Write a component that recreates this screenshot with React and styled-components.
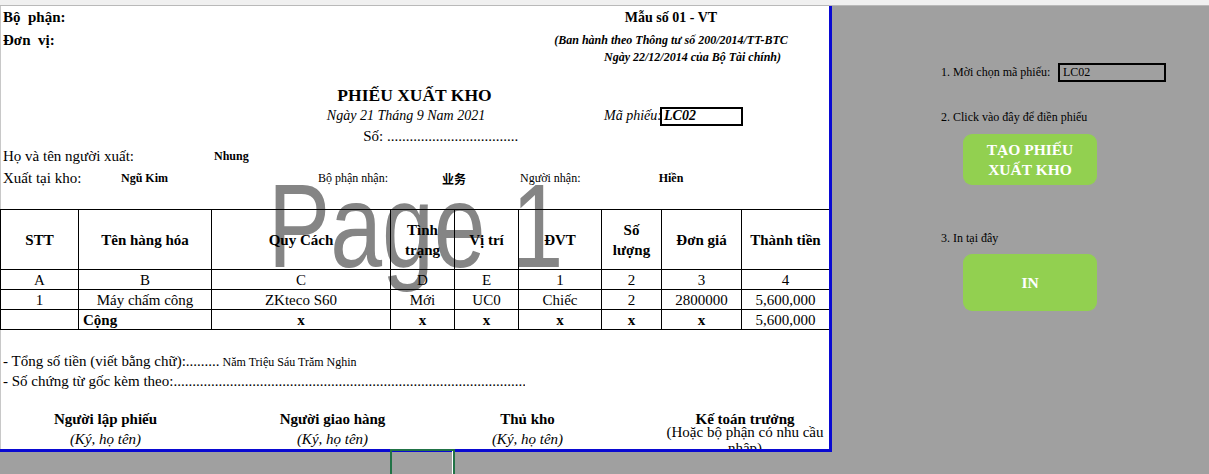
import React from "react";
import styled, { createGlobalStyle } from "styled-components";

const GlobalStyle = createGlobalStyle`
  html, body {
    margin: 0;
    padding: 0;
  }
  body {
    font-family: "Liberation Serif", "Times New Roman", serif;
    color: #000;
    background: #a0a0a0;
    overflow: hidden;
  }
`;

const COLS = "78px 133px 179px 64px 64px 83px 60px 80px 88px";
const WIDTHS = [78, 133, 179, 64, 64, 83, 60, 80, 88];

const Window = styled.div`
  position: relative;
  width: 1209px;
  height: 474px;
  display: flex;
  flex-direction: column;
  overflow: hidden;
  background: #a0a0a0;
`;

const TopStrip = styled.div`
  flex: none;
  height: 5px;
  background: #f0f0f0;
  border-bottom: 1px solid #b9b9b9;
`;

const Workspace = styled.div`
  flex: 1;
  display: flex;
  align-items: flex-start;
`;

const Sheet = styled.div`
  position: relative;
  flex: none;
  width: 829px;
  height: 443px;
  background: #fff;
  border-right: 3px solid #0a0ad2;
  border-bottom: 3px solid #0a0ad2;
  box-shadow: inset 1px 0 #c8c8c8;
  overflow: hidden;
`;

const Watermark = styled.div`
  position: absolute;
  left: 268px;
  top: 161px;
  z-index: 0;
  font-family: "Liberation Sans", Arial, sans-serif;
  font-size: 118px;
  line-height: 1;
  color: #858585;
  white-space: pre;
  transform: scaleX(0.79);
  transform-origin: left top;
  pointer-events: none;
`;

const Row = styled.div`
  position: relative;
  z-index: 1;
  display: grid;
  grid-template-columns: ${COLS};
  grid-template-rows: ${(p) => p.$h}px;
  height: ${(p) => p.$h}px;
  align-items: center;
`;

const justify = { left: "flex-start", center: "center", right: "flex-end" };

const Text = styled.div`
  grid-column: ${(p) => p.$col};
  grid-row: 1;
  min-width: 0;
  display: flex;
  align-items: baseline;
  justify-content: ${(p) => justify[p.$align || "left"]};
  padding: 0 ${(p) => p.$pr || 0}px 0 ${(p) => p.$pl || 0}px;
  font-size: ${(p) => p.$size || 15}px;
  font-weight: ${(p) => (p.$bold ? 700 : 400)};
  font-style: ${(p) => (p.$italic ? "italic" : "normal")};
  white-space: pre;
`;

const Small = styled.span`
  font-size: 12px;
`;

const Cjk = styled.span`
  font-family: "Noto Sans CJK SC", "Liberation Serif", sans-serif;
`;

const CodeBox = styled.div`
  grid-column: 8;
  grid-row: 1;
  margin-left: -1px;
  width: 83px;
  height: 19px;
  box-sizing: border-box;
  border: 2px solid #000;
  padding-left: 2px;
  display: flex;
  align-items: center;
  font-size: 14px;
  font-weight: 700;
  font-style: italic;
`;

const Leader = styled.span`
  display: inline-block;
  width: ${(p) => p.$w}px;
  overflow: hidden;
  white-space: nowrap;
  vertical-align: bottom;
`;

const Wrapped = styled.div`
  grid-column: ${(p) => p.$col};
  grid-row: 1;
  padding: 0 4px;
  text-align: center;
  font-size: 15px;
  line-height: 16px;
  white-space: normal;
`;

const Table = styled.table`
  position: relative;
  z-index: 1;
  width: 829px;
  table-layout: fixed;
  border-collapse: collapse;
  font-size: 15px;
`;

const Tr = styled.tr`
  height: ${(p) => p.$h}px;
`;

const Td = styled.td`
  padding: 0 ${(p) => (p.$align === "left" || p.$head ? 4 : 1)}px;
  border: 1px solid #000;
  text-align: ${(p) => p.$align || "center"};
  vertical-align: middle;
  font-weight: ${(p) => (p.$bold ? 700 : 400)};
  line-height: ${(p) => (p.$head ? 20 : 18)}px;
  white-space: ${(p) => (p.$head ? "normal" : "nowrap")};
  overflow: hidden;
`;

const Panel = styled.div`
  flex: 1;
  display: flex;
  flex-direction: column;
  align-items: flex-start;
  padding: 57px 0 0 109px;
  font-size: 12px;
`;

const PickRow = styled.div`
  display: flex;
  align-items: center;
  height: 19px;
`;

const PickLabel = styled.span`
  width: 117px;
`;

const PickBox = styled.div`
  width: 108px;
  height: 19px;
  box-sizing: border-box;
  border: 2px solid #000;
  padding-left: 3px;
  display: flex;
  align-items: center;
`;

const Step = styled.div`
  margin-top: ${(p) => p.$mt}px;
  line-height: 14px;
`;

const GreenButton = styled.button`
  margin: ${(p) => p.$mt}px 0 0 22px;
  width: 134px;
  height: ${(p) => p.$h}px;
  padding: 0;
  border: none;
  border-radius: 9px;
  background: #92d050;
  color: #fff;
  font-family: "Liberation Serif", "Times New Roman", serif;
  font-size: 15.5px;
  font-weight: 700;
  line-height: 20px;
  display: flex;
  align-items: center;
  justify-content: center;
  text-align: center;
`;

const Selection = styled.div`
  position: absolute;
  left: 390px;
  top: 449px;
  z-index: 2;
  width: 65px;
  height: 32px;
  box-sizing: border-box;
  border: 2px solid #217346;
  box-shadow: inset -1px 0 #fff;
`;

const headers = [
  "STT",
  "Tên hàng hóa",
  "Quy Cách",
  "Tình trạng",
  "Vị trí",
  "ĐVT",
  "Số lượng",
  "Đơn giá",
  "Thành tiền",
];
const codes = ["A", "B", "C", "D", "E", "1", "2", "3", "4"];
const items = [
  ["1", "Máy chấm công", "ZKteco S60", "Mới", "UC0", "Chiếc", "2", "2800000", "5,600,000"],
];

const DOTS = ".".repeat(140);

const App = () => (
  <Window>
    <GlobalStyle />
    <TopStrip />
    <Workspace>
      <Sheet>
        <Watermark>Page 1</Watermark>

        <Row $h={23}>
          <Text $col="1 / 4" $pl={3} $bold>Bộ  phận:</Text>
          <Text $col="7 / 9" $align="center" $size={14} $bold>Mẫu số 01 - VT</Text>
        </Row>
        <Row $h={22}>
          <Text $col="1 / 4" $pl={3} $bold>Đơn  vị:</Text>
          <Text $col="7 / 9" $align="center" $size={12} $bold $italic>
            (Ban hành theo Thông tư số 200/2014/TT-BTC
          </Text>
        </Row>
        <Row $h={12}>
          <Text $col="7 / 10" $pl={3} $size={12} $bold $italic>
            Ngày 22/12/2014 của Bộ Tài chính)
          </Text>
        </Row>
        <Row $h={22} />
        <Row $h={20}>
          <Text $col="1 / 10" $align="center" $size={17.5} $bold>PHIẾU XUẤT KHO</Text>
        </Row>
        <Row $h={22}>
          <Text $col="3 / 7" $align="center" $size={14} $italic>Ngày 21 Tháng 9 Nam 2021</Text>
          <Text $col="7" $pl={3} $size={14} $italic>Mã phiếu:</Text>
          <CodeBox>LC02</CodeBox>
        </Row>
        <Row $h={18}>
          <Text $col="3 / 6" $align="right">
            Số: <Leader $w={131}>{DOTS}</Leader>
          </Text>
        </Row>
        <Row $h={22}>
          <Text $col="1 / 3" $pl={3}>Họ và tên người xuất:</Text>
          <Text $col="3" $pl={3} $size={12} $bold>Nhung</Text>
        </Row>
        <Row $h={22}>
          <Text $col="1" $pl={3}>Xuất tại kho:</Text>
          <Text $col="2" $align="center" $size={12} $bold>Ngũ Kim</Text>
          <Text $col="3" $align="right" $pr={2} $size={12}>Bộ phận nhận:</Text>
          <Text $col="4 / 6" $align="center" $size={12} $bold><Cjk>业务</Cjk></Text>
          <Text $col="6" $pl={2} $size={12}>Người nhận:</Text>
          <Text $col="7 / 9" $align="center" $size={12} $bold>Hiền</Text>
        </Row>
        <Row $h={20} />

        <Table>
          <colgroup>
            {WIDTHS.map((w, i) => (
              <col key={i} style={{ width: w }} />
            ))}
          </colgroup>
          <tbody>
            <Tr $h={60}>
              {headers.map((h) => (
                <Td key={h} $bold $head>{h}</Td>
              ))}
            </Tr>
            <Tr $h={20}>
              {codes.map((c) => (
                <Td key={c}>{c}</Td>
              ))}
            </Tr>
            {items.map((item) => (
              <Tr $h={20} key={item[0]}>
                {item.map((v, i) => (
                  <Td key={i}>{v}</Td>
                ))}
              </Tr>
            ))}
            <Tr $h={20}>
              <Td />
              <Td $align="left" $bold>Cộng</Td>
              {["x", "x", "x", "x", "x", "x"].map((x, i) => (
                <Td key={i} $bold>{x}</Td>
              ))}
              <Td>5,600,000</Td>
            </Tr>
          </tbody>
        </Table>

        <Row $h={20} />
        <Row $h={22}>
          <Text $col="1 / 10" $pl={3}>
            - Tổng số tiền (viết bằng chữ):.........<Small> Năm Triệu Sáu Trăm Nghin</Small>
          </Text>
        </Row>
        <Row $h={18}>
          <Text $col="1 / 10" $pl={3}>
            - Số chứng từ gốc kèm theo:<Leader $w={352}>{DOTS}</Leader>
          </Text>
        </Row>
        <Row $h={18} />
        <Row $h={22}>
          <Text $col="1 / 3" $align="center" $bold>Người lập phiếu</Text>
          <Text $col="3 / 5" $align="center" $bold>Người giao hàng</Text>
          <Text $col="5 / 7" $align="center" $bold>Thủ kho</Text>
          <Text $col="8 / 10" $align="center" $bold>Kế toán trưởng</Text>
        </Row>
        <Row $h={19}>
          <Text $col="1 / 3" $align="center" $italic>(Ký, họ tên)</Text>
          <Text $col="3 / 5" $align="center" $italic>(Ký, họ tên)</Text>
          <Text $col="5 / 7" $align="center" $italic>(Ký, họ tên)</Text>
          <Wrapped $col="8 / 10">(Hoặc bộ phận có nhu cầu nhập)</Wrapped>
        </Row>
      </Sheet>

      <Panel>
        <PickRow>
          <PickLabel>1. Mời chọn mã phiếu:</PickLabel>
          <PickBox>LC02</PickBox>
        </PickRow>
        <Step $mt={28}>2. Click vào đây để điền phiếu</Step>
        <GreenButton $mt={10} $h={51}>
          TẠO PHIẾU
          <br />
          XUẤT KHO
        </GreenButton>
        <Step $mt={46}>3. In tại đây</Step>
        <GreenButton $mt={9} $h={57}>IN</GreenButton>
      </Panel>
    </Workspace>
    <Selection />
  </Window>
);

export default App;
